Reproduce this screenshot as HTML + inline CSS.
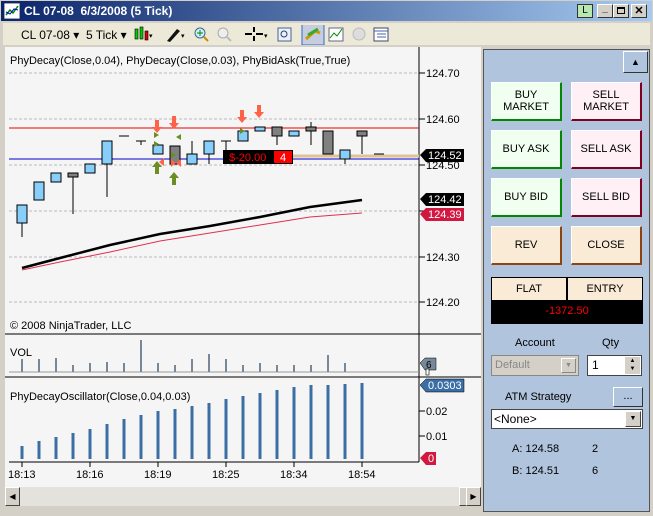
<!DOCTYPE html><html><head><style>
*{margin:0;padding:0;box-sizing:border-box}
body{width:653px;height:516px;background:#d4d0c8;font-family:"Liberation Sans",sans-serif;font-size:11px;position:relative;overflow:hidden}
.a{position:absolute}
.btn{position:absolute;width:71px;height:39px;display:flex;align-items:center;justify-content:center;text-align:center;font-size:11px;line-height:12px;border:1px solid;border-color:#fff #444 #444 #fff}
.g{background:#f0fff0;border-right:2px solid #080;border-bottom:2px solid #080}
.p{background:#fff0f5;border-right:2px solid #800020;border-bottom:2px solid #800020}
.t{background:#faebd7;border-right:2px solid #8b4513;border-bottom:2px solid #8b4513}
</style></head><body>
<div class="a" style="left:0;top:0;width:653px;height:22px;background:linear-gradient(90deg,#0a246a,#a6caf0);border:1px solid #d4d0c8"></div>
<svg class="a" style="left:4px;top:3px" width="16" height="16"><rect width="16" height="16" fill="#fff" stroke="#446"/><path d="M2 12 L6 7 L9 10 L14 3" stroke="#080" fill="none" stroke-width="1.5"/><path d="M2 9 L6 11 L10 6 L14 7" stroke="#00c" fill="none"/></svg>
<div class="a" style="left:24px;top:4px;color:#fff;font-weight:bold;font-size:12px">CL 07-08&nbsp; 6/3/2008 (5 Tick)</div>
<div class="a" style="left:577px;top:4px;width:16px;height:14px;background:#b8e8b0;border:1px solid #333;font-size:10px;text-align:center;line-height:12px">L</div>
<div class="a" style="left:597px;top:4px;width:16px;height:14px;background:#d4d0c8;border:1px solid;border-color:#fff #333 #333 #fff;font-size:10px;text-align:center;line-height:8px;font-weight:bold">_</div>
<div class="a" style="left:613px;top:4px;width:16px;height:14px;background:#d4d0c8;border:1px solid;border-color:#fff #333 #333 #fff"><div style="margin:2px 3px;width:8px;height:7px;border:1px solid #000;border-top-width:2px"></div></div>
<div class="a" style="left:631px;top:4px;width:16px;height:14px;background:#d4d0c8;border:1px solid;border-color:#fff #333 #333 #fff;font-size:11px;text-align:center;line-height:12px;font-weight:bold">✕</div>
<div class="a" style="left:3px;top:23px;width:647px;height:22px;background:#ece9d8"></div>
<div class="a" style="left:21px;top:28px;font-size:12px">CL 07-08 ▾&nbsp; 5 Tick ▾</div>
<svg class="a" style="left:133px;top:25px" width="260" height="20">
<rect x="2" y="4" width="3" height="10" fill="#0c0" stroke="#000" stroke-width=".6"/><rect x="7" y="2" width="3" height="12" fill="#0c0" stroke="#000" stroke-width=".6"/><rect x="12" y="6" width="3" height="9" fill="#d00" stroke="#000" stroke-width=".6"/><text x="16" y="13" font-size="7">▾</text>
<path d="M34 16 L44 4 L47 6 L37 17Z" fill="#111"/><text x="48" y="13" font-size="7">▾</text>
<circle cx="67" cy="8" r="5" fill="#cef" stroke="#468"/><path d="M71 12 L75 16" stroke="#c80" stroke-width="2"/><path d="M64 8h6M67 5v6" stroke="#080"/>
<circle cx="90" cy="8" r="5" fill="#eee" stroke="#aaa"/><path d="M94 12 L98 16" stroke="#bbb" stroke-width="2"/>
<path d="M112 9h7M123 9h7M121 2v5M121 11v5" stroke="#000" stroke-width="2"/><text x="131" y="13" font-size="7">▾</text>
<rect x="145" y="3" width="13" height="13" fill="#eef" stroke="#468"/><circle cx="151" cy="9" r="3" fill="none" stroke="#246"/>
<rect x="169" y="-1" width="22" height="21" fill="#c6cde0" stroke="#316ac5"/><path d="M173 14 L182 6 L187 8" stroke="#c90" stroke-width="3" fill="none"/><path d="M175 10 L185 4" stroke="#3a3" stroke-width="3"/>
<rect x="196" y="3" width="14" height="13" fill="#fff" stroke="#668"/><path d="M197 13 L201 8 L204 11 L209 4" stroke="#080" fill="none"/>
<circle cx="226" cy="9" r="6" fill="#ddd" stroke="#bbb"/>
<rect x="241" y="3" width="14" height="13" fill="#fff" stroke="#446"/><path d="M241 6h14M244 9h9M244 12h9" stroke="#46a"/>
</svg>
<div class="a" style="left:5px;top:47px;width:476px;height:440px;background:#f5f5f5"></div>
<svg class="a" style="left:0;top:0" width="482" height="487" font-family="Liberation Sans" font-size="11">
<g stroke="#bbb" stroke-dasharray="3,2"><path d="M9 73H419M9 119H419M9 165H419M9 211H419M9 257H419M9 302H419"/></g>
<path d="M419 47V462" stroke="#000"/>
<g stroke="#000"><path d="M419 73h6M419 119h6M419 165h6M419 211h6M419 257h6M419 302h6M419 411h6M419 436h6"/></g>
<g font-size="11"><text x="426" y="77">124.70</text><text x="426" y="123">124.60</text><text x="426" y="169">124.50</text><text x="426" y="261">124.30</text><text x="426" y="306">124.20</text><text x="426" y="415">0.02</text><text x="426" y="440">0.01</text></g>
<path d="M9 128H419" stroke="#e00"/><path d="M9 159H419" stroke="#00c"/><path d="M290 156H419" stroke="#e0c29a" stroke-width="3"/>
<path d="M22 268 L60 258 L110 245 L160 234 L210 226 L260 217 L310 207 L362 200" stroke="#000" stroke-width="2.5" fill="none"/>
<path d="M22 270 L60 262 L110 252 L160 241 L210 233 L260 225 L310 217 L362 213" stroke="#e03050" stroke-width="1" fill="none"/>
<g stroke="#000">
<path d="M22 223V237M73 177V214M107 164V197M141 141V145M175 164V146M192 141V154M209 154V164M226 141V164M277 136V145M311 122V145M345 159V164M362 136V154"/>
<path d="M119 136h10M136 141h10M221 141h10M374 154h10"/>
</g>
<g stroke="#000" fill="#87cefa">
<rect x="17" y="205" width="10" height="18"/><rect x="34" y="182" width="10" height="18"/><rect x="51" y="173" width="10" height="9"/><rect x="85" y="164" width="10" height="9"/><rect x="102" y="141" width="10" height="23"/><rect x="153" y="145" width="10" height="9"/><rect x="187" y="154" width="10" height="10"/><rect x="204" y="141" width="10" height="13"/><rect x="238" y="131" width="10" height="10"/><rect x="255" y="127" width="10" height="4"/><rect x="289" y="131" width="10" height="5"/><rect x="340" y="150" width="10" height="9"/>
</g>
<g stroke="#000" fill="#808080">
<rect x="68" y="173" width="10" height="4"/><rect x="170" y="146" width="10" height="18"/><rect x="272" y="127" width="10" height="9"/><rect x="306" y="127" width="10" height="4"/><rect x="323" y="131" width="10" height="23"/><rect x="357" y="131" width="10" height="5"/>
</g>
<g fill="#ff6347"><path d="M155 120h4v7h3l-5 6-5-6h3z"/><path d="M172 116h4v7h3l-5 6-5-6h3z"/><path d="M240 110h4v7h3l-5 6-5-6h3z"/><path d="M257 105h4v7h3l-5 6-5-6h3z"/></g>
<g fill="#6b8e23"><path d="M155 174h4v-7h3l-5-6-5 6h3z"/><path d="M172 185h4v-7h3l-5-6-5 6h3z"/><path d="M154 132l5 3-5 3z M154 141l5 3-5 3z M171 152l5 3-5 3z M181 134l-5 3 5 3z M240 128l5 3-5 3z"/></g>
<g fill="#ff6347"><path d="M164 158l-5 4 5 4z M171 159l5 4-5 4z M181 159l-5 4 5 4z"/></g>
<rect x="223" y="150" width="70" height="14" fill="#000"/><text x="229" y="161" fill="#f00">$-20.00</text><rect x="274" y="151" width="18" height="12" fill="#f00"/><text x="280" y="161" fill="#fff">4</text>
<path d="M420 155l6-6h38v13h-38z" fill="#000"/><text x="428" y="159" fill="#fff">124.52</text>
<path d="M420 199l6-6h38v13h-38z" fill="#000"/><text x="428" y="203" fill="#fff">124.42</text>
<path d="M420 214l6-6h38v13h-38z" fill="#d01840"/><text x="428" y="218" fill="#fff">124.39</text>
<text x="10" y="64">PhyDecay(Close,0.04), PhyDecay(Close,0.03), PhyBidAsk(True,True)</text>
<text x="10" y="329">© 2008 NinjaTrader, LLC</text>
<path d="M5 334H481M5 377H481M9 462H419" stroke="#000"/>
<text x="10" y="356">VOL</text>
<path d="M9 372H419" stroke="#999"/>
<g stroke="#778899" stroke-width="2"><path d="M22 372v-13M39 372v-13M56 372v-14M73 372v-7M90 372v-9M107 372v-10M124 372v-9M141 372v-32M158 372v-9M175 372v-7M192 372v-13M209 372v-18M226 372v-13M243 372v-7M260 372v-9M277 372v-7M294 372v-7M311 372v-7M328 372v-17M345 372v-9"/></g>
<path d="M420 363l5-5h11v12h-11z" fill="#778899" stroke="#000" stroke-width=".5"/><text x="426" y="368" font-size="10">6</text>
<rect x="426" y="369" width="3" height="6" fill="#fff" stroke="#000" stroke-width=".6"/>
<text x="10" y="400">PhyDecayOscillator(Close,0.04,0.03)</text>
<g stroke="#3a6ea5" stroke-width="3"><path d="M22 459v-13M39 459v-18M56 459v-22M73 459v-26M90 459v-30M107 459v-35M124 459v-40M141 459v-44M158 459v-48M175 459v-50M192 459v-53M209 459v-56M226 459v-60M243 459v-63M260 459v-66M277 459v-69M294 459v-72M311 459v-74M328 459v-74M345 459v-75M362 459v-76"/></g>
<path d="M420 385l6-6h38v13h-38z" fill="#3a6ea5" stroke="#000" stroke-width=".5"/><text x="428" y="389" fill="#fff">0.0303</text>
<path d="M420 458l6-6h10v13h-10z" fill="#d01840"/><text x="428" y="462" fill="#fff">0</text>
<g stroke="#000"><path d="M22 462v5M90 462v5M158 462v5M226 462v5M294 462v5M362 462v5"/></g>
<g font-size="11"><text x="8" y="478">18:13</text><text x="76" y="478">18:16</text><text x="144" y="478">18:19</text><text x="212" y="478">18:25</text><text x="280" y="478">18:34</text><text x="348" y="478">18:54</text></g>
</svg>
<div class="a" style="left:5px;top:487px;width:476px;height:19px;background:#e4e2dc"></div>
<div class="a" style="left:5px;top:487px;width:15px;height:19px;background:#d4d0c8;border:1px solid;border-color:#fff #444 #444 #fff;font-size:8px;line-height:17px;text-align:center">◀</div>
<div class="a" style="left:459px;top:487px;width:8px;height:19px;background:#d4d0c8;border:1px solid;border-color:#fff #444 #444 #fff"></div>
<div class="a" style="left:466px;top:487px;width:15px;height:19px;background:#d4d0c8;border:1px solid;border-color:#fff #444 #444 #fff;font-size:8px;line-height:17px;text-align:center">▶</div>
<div class="a" style="left:483px;top:49px;width:167px;height:463px;background:#b0c4de;border:1px solid #555"></div>
<div class="a" style="left:623px;top:51px;width:25px;height:22px;background:#b0c4de;border:1px solid;border-color:#fff #333 #333 #fff;font-size:9px;text-align:center;line-height:20px">▲</div>
<div class="btn g" style="left:491px;top:82px">BUY<br>MARKET</div><div class="btn p" style="left:571px;top:82px">SELL<br>MARKET</div>
<div class="btn g" style="left:491px;top:130px">BUY ASK</div><div class="btn p" style="left:571px;top:130px">SELL ASK</div>
<div class="btn g" style="left:491px;top:178px">BUY BID</div><div class="btn p" style="left:571px;top:178px">SELL BID</div>
<div class="btn t" style="left:491px;top:226px">REV</div><div class="btn t" style="left:571px;top:226px">CLOSE</div>
<div class="a" style="left:491px;top:277px;width:152px;height:47px;border:1px solid #000;background:#000">
<div class="a" style="left:0;top:0;width:75px;height:22px;background:#faebd7;border-right:1px solid #000;text-align:center;line-height:22px">FLAT</div>
<div class="a" style="left:76px;top:0;width:74px;height:22px;background:#faebd7;text-align:center;line-height:22px">ENTRY</div>
<div class="a" style="left:0;top:22px;width:150px;height:23px;color:#f00;text-align:center;line-height:23px">-1372.50</div></div>
<div class="a" style="left:515px;top:337px;font-size:11px">Account</div><div class="a" style="left:602px;top:337px">Qty</div>
<div class="a" style="left:491px;top:355px;width:88px;height:21px;background:#d4d0c8;border:1px solid #888;color:#888;padding:3px 3px">Default<div class="a" style="right:2px;top:2px;width:15px;height:15px;border:1px solid;border-color:#fff #888 #888 #fff;font-size:7px;text-align:center;line-height:14px">▼</div></div>
<div class="a" style="left:587px;top:355px;width:55px;height:21px;background:#fff;border:1px solid #444;padding:2px 4px;font-size:12px">1<div class="a" style="right:1px;top:1px;width:15px;height:17px;background:#d4d0c8;font-size:6px;text-align:center;line-height:8px">▲<br>▼</div></div>
<div class="a" style="left:505px;top:391px">ATM Strategy</div>
<div class="a" style="left:613px;top:387px;width:30px;height:20px;background:#b0c4de;border:1px solid;border-color:#fff #333 #333 #fff;text-align:center;line-height:16px">...</div>
<div class="a" style="left:491px;top:409px;width:152px;height:20px;background:#fff;border:1px solid #444;padding:2px 2px;font-size:12px">&lt;None&gt;<div class="a" style="right:1px;top:1px;width:16px;height:16px;background:#d4d0c8;border:1px solid;border-color:#fff #444 #444 #fff;font-size:7px;text-align:center;line-height:14px">▼</div></div>
<div class="a" style="left:512px;top:443px">A: 124.58</div><div class="a" style="left:592px;top:443px">2</div>
<div class="a" style="left:512px;top:465px">B: 124.51</div><div class="a" style="left:592px;top:465px">6</div>
</body></html>
